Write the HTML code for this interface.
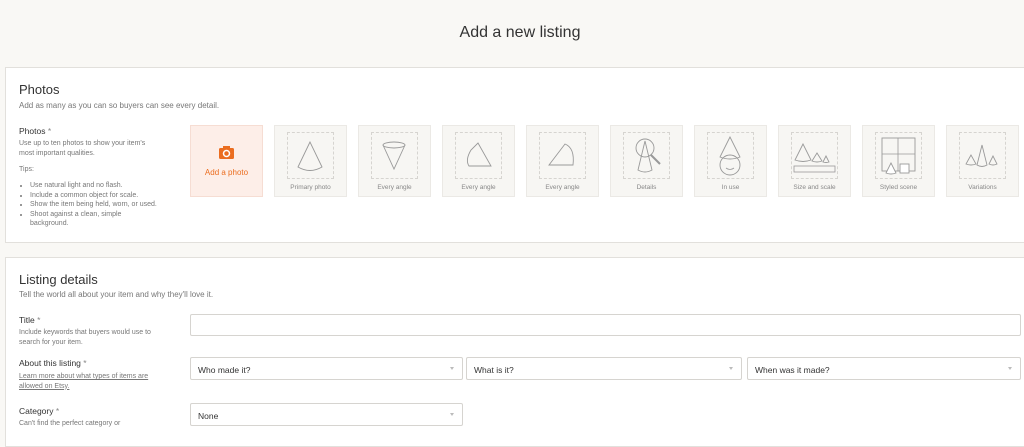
<!DOCTYPE html>
<html><head><meta charset="utf-8"><style>
*{box-sizing:border-box;margin:0;padding:0}
body{width:1024px;height:430px;overflow:hidden;background:#f9f8f5;font-family:"Liberation Sans",sans-serif;color:#222;position:relative}
.a{position:absolute}
h1{position:absolute;top:24px;left:0;width:1040px;text-align:center;font-size:16px;font-weight:normal;color:#333}
.panel{position:absolute;left:5px;width:1030px;background:#fff;border:1px solid #e2e0dc}
.h2{font-size:13px;color:#333}
.sub{font-size:8px;color:#777}
.lbl{font-size:8.5px;color:#333}
.sm{font-size:7px;color:#777;line-height:9.5px}
.tile{position:absolute;top:125px;width:73px;height:72px;background:#f7f6f3;border:1px solid #ebe9e5}
.tile .d{position:absolute;left:12px;top:6px;width:47px;height:47px;border:1px dashed #d6d4d0}
.tile .c{position:absolute;top:58px;width:100%;text-align:center;font-size:6.5px;color:#888}
.tile svg{position:absolute;left:12px;top:6px}
.inp{position:absolute;background:#fff;border:1px solid #d6d4d0;border-radius:2px;font-size:8.5px;color:#333;padding:7px 7px}
.inp .ar{position:absolute;right:8px;top:9px;width:0;height:0;border-left:2.5px solid transparent;border-right:2.5px solid transparent;border-top:3px solid #bbb}
</style></head><body>
<h1>Add a new listing</h1>
<div class="panel" style="top:67px;height:176px"></div>
<div class="a h2" style="left:19px;top:82px">Photos</div>
<div class="a sub" style="left:19px;top:101px">Add as many as you can so buyers can see every detail.</div>
<div class="a lbl" style="left:19px;top:126px">Photos <span style="color:#888">*</span></div>
<div class="a sm" style="left:19px;top:139px;width:140px">Use up to ten photos to show your item's most important qualities.</div>
<div class="a sm" style="left:19px;top:165px">Tips:</div>
<ul class="a sm" style="left:30px;top:181px;width:128px;list-style:disc">
<li>Use natural light and no flash.</li><li>Include a common object for scale.</li><li>Show the item being held, worn, or used.</li><li>Shoot against a clean, simple background.</li></ul>
<div class="a" style="left:190px;top:125px;width:73px;height:72px;background:#fdeee8;border:1px solid #f6ddd3"></div>
<svg class="a" style="left:219px;top:146px" width="15" height="13" viewBox="0 0 15 13"><rect x="0" y="2" width="15" height="11" rx="1.5" fill="#eb6d20"/><rect x="4" y="0" width="7" height="3" fill="#eb6d20"/><circle cx="7.5" cy="7.5" r="3" fill="none" stroke="#fff" stroke-width="1.5"/></svg>
<div class="a" style="left:190px;top:168px;width:73px;text-align:center;font-size:8px;color:#eb6d20">Add a photo</div>

<div class="tile" style="left:274px"><div class="d"></div><svg width="47" height="47"><path d="M23 10 L11 35 Q23 42 35 35 Z" fill="none" stroke="#999" stroke-width="0.9"/></svg><div class="c">Primary photo</div></div>
<div class="tile" style="left:358px"><div class="d"></div><svg width="47" height="47"><ellipse cx="23" cy="13" rx="11" ry="3" fill="none" stroke="#999" stroke-width="0.9"/><path d="M12 13 L23 37 L34 13" fill="none" stroke="#999" stroke-width="0.9"/></svg><div class="c">Every angle</div></div>
<div class="tile" style="left:442px"><div class="d"></div><svg width="47" height="47"><path d="M23 11 L36 34 L14 34 Q10 28 16 18 Z" fill="none" stroke="#999" stroke-width="0.9"/></svg><div class="c">Every angle</div></div>
<div class="tile" style="left:526px"><div class="d"></div><svg width="47" height="47"><path d="M10 33 L26 12 Q36 16 34 33 Z" fill="none" stroke="#999" stroke-width="0.9"/></svg><div class="c">Every angle</div></div>
<div class="tile" style="left:610px"><div class="d"></div><svg width="47" height="47"><circle cx="22" cy="16" r="9" fill="none" stroke="#999" stroke-width="0.9"/><path d="M28 23 L37 32" stroke="#999" stroke-width="2"/><path d="M22 9 L15 38 Q22 42 29 38 Z" fill="none" stroke="#999" stroke-width="0.9"/></svg><div class="c">Details</div></div>
<div class="tile" style="left:694px"><div class="d"></div><svg width="47" height="47"><path d="M23 5 L13 25 Q23 29 33 25 Z" fill="none" stroke="#999" stroke-width="0.9"/><circle cx="23" cy="33" r="10" fill="none" stroke="#999" stroke-width="0.9"/><path d="M19 36 Q23 39 27 36" fill="none" stroke="#999" stroke-width="0.8"/></svg><div class="c">In use</div></div>
<div class="tile" style="left:778px"><div class="d"></div><svg width="47" height="47"><path d="M12 12 L4 28 Q12 31 20 28 Z M26 21 L21 29 Q26 31 31 29 Z M35 24 L32 30 Q35 31 38 30 Z" fill="none" stroke="#999" stroke-width="0.9"/><rect x="3" y="34" width="41" height="6" fill="none" stroke="#999" stroke-width="0.8"/></svg><div class="c">Size and scale</div></div>
<div class="tile" style="left:862px"><div class="d"></div><svg width="47" height="47"><rect x="7" y="6" width="33" height="33" fill="none" stroke="#999" stroke-width="0.9"/><path d="M23 6 V39 M7 22 H40" stroke="#999" stroke-width="0.8"/><path d="M16 31 L11 41 Q16 43 21 41 Z" fill="#fff" stroke="#999" stroke-width="0.9"/><rect x="25" y="32" width="9" height="9" fill="#fff" stroke="#999" stroke-width="0.9"/></svg><div class="c">Styled scene</div></div>
<div class="tile" style="left:946px"><div class="d"></div><svg width="47" height="47"><path d="M12 23 L7 32 Q12 34 17 32 Z M23 13 L18 33 Q23 36 28 33 Z M34 24 L30 32 Q34 34 38 32 Z" fill="none" stroke="#999" stroke-width="0.9"/></svg><div class="c">Variations</div></div>

<div class="panel" style="top:257px;height:190px"></div>
<div class="a h2" style="left:19px;top:272px">Listing details</div>
<div class="a sub" style="left:19px;top:290px">Tell the world all about your item and why they'll love it.</div>
<div class="a lbl" style="left:19px;top:315px">Title <span style="color:#888">*</span></div>
<div class="a sm" style="left:19px;top:328px;width:150px">Include keywords that buyers would use to search for your item.</div>
<div class="inp" style="left:190px;top:314px;width:831px;height:22px"></div>
<div class="a lbl" style="left:19px;top:358px">About this listing <span style="color:#888">*</span></div>
<div class="a sm" style="left:19px;top:372px;width:150px;text-decoration:underline">Learn more about what types of items are allowed on Etsy.</div>
<div class="inp" style="left:190px;top:357px;width:273px;height:23px">Who made it?<span class="ar"></span></div>
<div class="inp" style="left:466px;top:357px;width:276px;height:23px">What is it?<span class="ar"></span></div>
<div class="inp" style="left:747px;top:357px;width:274px;height:23px">When was it made?<span class="ar"></span></div>
<div class="a lbl" style="left:19px;top:406px">Category <span style="color:#888">*</span></div>
<div class="a sm" style="left:19px;top:419px">Can't find the perfect category or</div>
<div class="inp" style="left:190px;top:403px;width:273px;height:23px">None<span class="ar"></span></div>
</body></html>
